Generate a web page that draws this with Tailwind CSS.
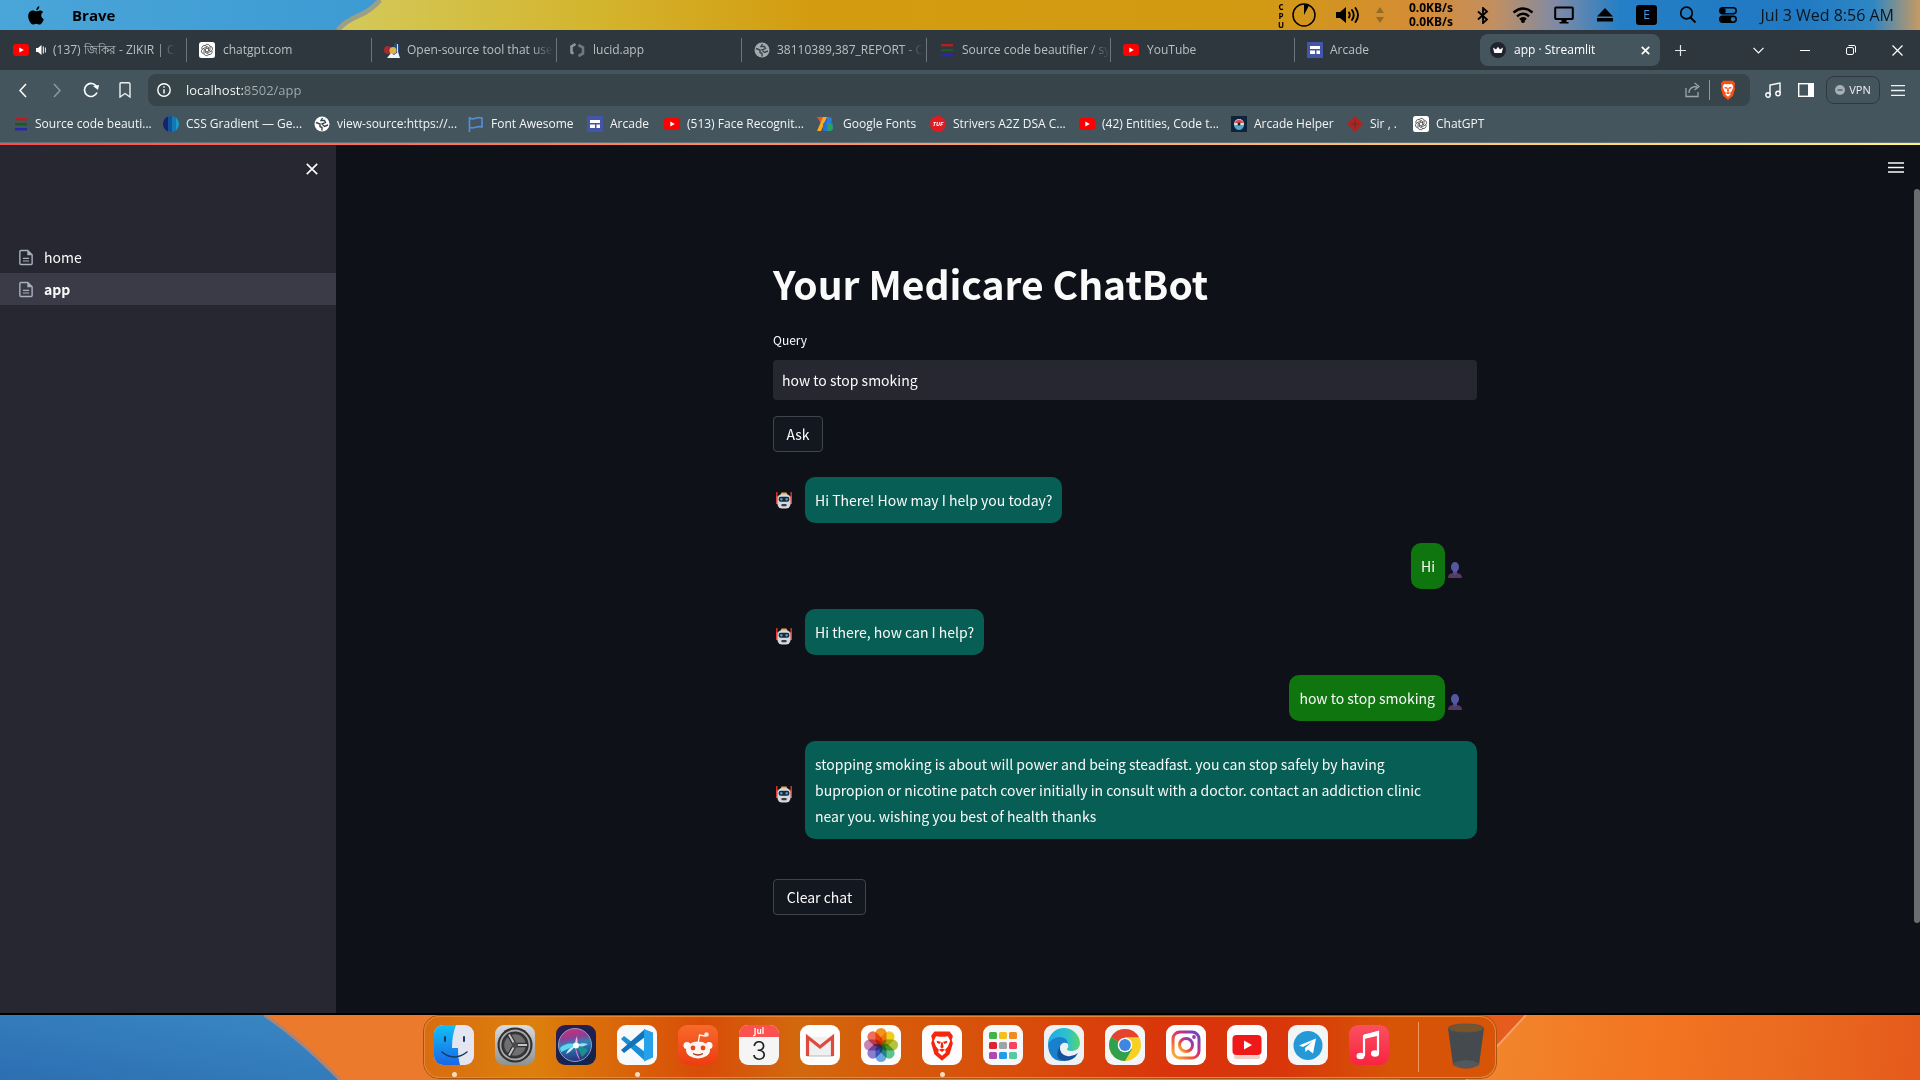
<!DOCTYPE html>
<html lang="en">
<head>
<meta charset="utf-8">
<meta name="viewport" content="width=device-width, initial-scale=1">
<title>app · Streamlit</title>
<script src="https://cdn.jsdelivr.net/npm/@tailwindcss/browser@4"></script>
</head>
<body class="flex h-screen flex-col overflow-hidden bg-[#0e1117] font-['Open_Sans','Noto_Sans',sans-serif] text-[12px] text-[#e8ecee]">

<!-- shared icon symbols -->
<svg class="hidden" aria-hidden="true">
  <symbol id="yt" viewBox="0 0 16 16"><rect y="2" width="16" height="12" rx="3" fill="#f00"/><path d="M6.3 5.4v5.2L10.8 8z" fill="#fff"/></symbol>
  <symbol id="gpt" viewBox="0 0 16 16"><rect width="16" height="16" rx="2.5" fill="#fff"/><g fill="none" stroke="#444" stroke-width=".8"><path id="petal" d="M6.300 3.200a2.700 2.700 0 0 1 4.700 1.300v3.700L8 10"/><use href="#petal" transform="rotate(60 8 8)"/><use href="#petal" transform="rotate(120 8 8)"/><use href="#petal" transform="rotate(180 8 8)"/><use href="#petal" transform="rotate(240 8 8)"/><use href="#petal" transform="rotate(300 8 8)"/></g></symbol>
  <symbol id="bars" viewBox="0 0 16 16"><rect x="2" y="2" width="12" height="2.4" fill="#b3201e"/><rect x="2" y="7" width="12" height="2.4" fill="#155c25"/><rect x="2" y="12" width="12" height="2.4" fill="#2c27a8"/></symbol>
  <symbol id="arcade" viewBox="0 0 16 16"><rect width="16" height="16" fill="#4355a8"/><path d="M3 4h10v3H3zM3 8.5h5V12H3zM9.5 8.5H13V12H9.5z" fill="#fff"/></symbol>
  <symbol id="globe" viewBox="0 0 16 16"><circle cx="8" cy="8" r="7.500" fill="currentColor"/><path d="M2 6.500l4 1.500v2.500l2 1v3M8.500 2L7 4.500h3.500l1 2L8 8l2.500 2.500L14 9" fill="none" stroke="#37444a" stroke-width="1.400"/></symbol>
  <symbol id="doc" viewBox="0 0 16 18"><path d="M1 2.200Q1 1 2.200 1H10l5 5v9.800q0 1.200-1.200 1.200H2.200Q1 17 1 15.800z" fill="none" stroke="#a9b1bd" stroke-width="1.600"/><path d="M9.500 1v5.500H15z" fill="#a9b1bd"/><path d="M4.500 10h7M4.500 13h7" stroke="#a9b1bd" stroke-width="1.300"/></symbol>
  <symbol id="robot" viewBox="0 0 16 17"><path d="M.8 0v8M15.200 0v8" stroke="#e0382c" stroke-width="1.400"/><path d="M0 4h2v8H0zM14 4h2v8h-2z" fill="#d8443a"/><path d="M5.500.5h5l1 2.500h-7z" fill="#f2a93b"/><rect x="1.500" y="2.200" width="13" height="14.300" rx="4.500" fill="#d6d8dc"/><rect x="2.600" y="4.800" width="10.800" height="5" rx="2.200" fill="#20262d"/><circle cx="5.300" cy="7.300" r="1.300" fill="#2aa7e8"/><circle cx="10.700" cy="7.300" r="1.300" fill="#2aa7e8"/><rect x="5.300" y="12" width="5.400" height="2.200" rx="1" fill="#3b3f44"/></symbol>
  <symbol id="user" viewBox="0 0 16 16"><path d="M1 16q0-4.500 5-5h4q5 .5 5 5z" fill="#563862"/><path d="M6 9h4v2.500l-2 1.500-2-1.500z" fill="#4a4d94"/><ellipse cx="8" cy="5" rx="4" ry="5" fill="#5558a0"/></symbol>
  <symbol id="lion" viewBox="0 0 24 28"><path d="M5 1h14l3 4-1 4 1 3-3 10-7 6-7-6-3-10 1-3-1-4z" fill="currentColor"/><path d="M6.500 5.500l3.500.500h4l3.500-.5 2 4-2 5.500-2.500 3 .5 2.500-3.500 3-3.500-3 .5-2.500-2.500-3-2-5.500z" fill="#fff"/><path d="M7 9.500l4 1-1 2-2.500-.8zM17 9.500l-4 1 1 2 2.500-.8zM11.300 11h1.400l.8 4.500-1.500 1-1.500-1zM9 18l3-1.200 3 1.200-3 2z" fill="currentColor"/></symbol>
</svg>

<!-- system menu bar -->
<header class="relative flex h-[30px] shrink-0 items-center overflow-hidden bg-[#d39a10] text-black">
  <svg class="absolute inset-0 size-full" viewBox="0 0 1920 30" preserveAspectRatio="none" aria-hidden="true">
    <defs>
      <linearGradient id="sky"><stop offset="0" stop-color="#4aa5d8"/><stop offset="1" stop-color="#3d9bd3"/></linearGradient>
      <linearGradient id="top" gradientUnits="userSpaceOnUse" x1="340" x2="1920" y1="0" y2="0"><stop offset="0" stop-color="#d3c95a"/><stop offset=".16" stop-color="#d3b52e"/><stop offset=".3" stop-color="#d39c10"/><stop offset=".58" stop-color="#d29a12"/><stop offset=".68" stop-color="#d58c35"/><stop offset=".73" stop-color="#c38f60"/><stop offset=".77" stop-color="#7f8aa5"/><stop offset=".81" stop-color="#247fc6"/><stop offset=".92" stop-color="#2079c2"/><stop offset=".97" stop-color="#2e86c4"/><stop offset="1" stop-color="#c79a62"/></linearGradient>
    </defs>
    <rect width="1920" height="30" fill="url(#top)"/>
    <path d="M0 0h380q-8 10-22 16t-20 14H0z" fill="url(#sky)"/>
    <path d="M380 0q-8 10-22 16t-20 14" fill="none" stroke="#9a9f88" stroke-width="5"/>
  </svg>
  <div class="relative flex w-full items-center pr-[26px] pl-7">
    <svg class="h-[19px] w-4" viewBox="0 0 16 19" role="img" aria-label="Apple"><path d="M11.300 0q.2 3-3 4.500Q8.200 1.200 11.300 0zM8.200 5.300c1.200 0 2-.9 3.700-.9 1.500 0 2.600.7 3.300 1.700-3 1.800-2.400 6 .6 7.100-.8 2.400-2.400 5.300-4.200 5.300-1.300 0-1.700-.8-3.300-.8s-2.100.8-3.300.8C2.700 18.500.2 14 .2 10.300c0-3.700 2.300-5.800 4.600-5.800 1.500 0 2.400.8 3.400.8z"/></svg>
    <button class="ml-7 text-[15px] leading-5 font-bold">Brave</button>
    <div class="ml-auto flex items-center">
      <span class="flex w-2 flex-col items-center text-[8px] leading-[9px] font-bold"><span>C</span><span>P</span><span>U</span></span>
      <svg class="ml-[7px] size-6" viewBox="0 0 24 24"><circle cx="12" cy="12" r="11" fill="none" stroke="#000" stroke-width="1.500"/><path d="M12 12V1q3 0 5 1.500z"/></svg>
      <svg class="ml-5 h-[18px] w-6" viewBox="0 0 24 18"><path d="M0 6h4l6-5v16l-6-5H0z"/><path d="M13 6.500q1.500 2.500 0 5M16 4q3.500 5 0 10M19.500 2q5 7 0 14" fill="none" stroke="#000" stroke-width="1.900" stroke-linecap="round"/></svg>
      <svg class="ml-4 h-4 w-2" viewBox="0 0 8 16" fill="#8f6b2c"><path d="M4 0l4 6H0zM4 16l4-6H0z"/></svg>
      <span class="ml-[23px] w-12 text-center text-[12px] leading-[14px] font-bold whitespace-nowrap"><span class="block">0.0KB/s</span><span class="block">0.0KB/s</span></span>
      <svg class="ml-[22px] h-[17px] w-3" viewBox="0 0 12 17"><path d="M1 4.500l9 8L6 16V1l4 3.500-9 8" fill="none" stroke="#000" stroke-width="1.800"/></svg>
      <svg class="ml-[23px] h-4 w-[22px]" viewBox="0 0 22 16"><path d="M1.500 5.500q9.500-8 19 0M5 9.300q6-5 12 0M8 12.500q3-2.500 6 0" fill="none" stroke="#000" stroke-width="2.400"/><circle cx="11" cy="14" r="2"/></svg>
      <svg class="ml-5 h-[18px] w-5" viewBox="0 0 20 18"><path d="M2 1.500h16q.8 0 .8.800v10q0 .8-.8.800H2q-.8 0-.8-.8v-10q0-.8.800-.8z" fill="none" stroke="#000" stroke-width="2"/><path d="M7.500 13h5v3h2v1.500h-9V16h2z"/></svg>
      <svg class="ml-[23px] h-[14px] w-4" viewBox="0 0 16 14"><path d="M8 0l8 8.500H0zM0 10h16v3.600H0z"/></svg>
      <span class="ml-[23px] flex h-5 w-[21px] items-center justify-center rounded-[3px] bg-black text-[12px] text-[#4a9be0]">E</span>
      <svg class="ml-[22px] size-[18px]" viewBox="0 0 18 18"><circle cx="7.500" cy="7" r="5.800" fill="none" stroke="#000" stroke-width="1.700"/><path d="M11.500 11.500l5 5" stroke="#000" stroke-width="2"/></svg>
      <svg class="ml-[22px] h-4 w-[18px]" viewBox="0 0 18 16"><rect x=".8" y=".8" width="16.400" height="6" rx="3" fill="none" stroke="#000" stroke-width="1.500"/><circle cx="4" cy="3.800" r="2.800"/><rect y="8.500" width="18" height="7.500" rx="3.700"/><circle cx="14" cy="12.200" r="2.200" fill="#2079c2"/></svg>
      <time class="ml-[23px] w-[134px] text-right text-[16px] leading-5 whitespace-nowrap text-[#0a1622]">Jul 3 Wed 8:56 AM</time>
    </div>
  </div>
</header>

<!-- tab strip -->
<nav class="flex h-10 shrink-0 items-center bg-[#2d373d] pl-px text-[#b9c0c4]" aria-label="Tabs">
  <button class="flex h-6 w-[186px] items-center border-r border-[#6b757b] pl-3 whitespace-nowrap"><svg class="size-4 shrink-0"><use href="#yt"/></svg><svg class="mx-[7px] h-[10px] w-[10px] shrink-0" viewBox="0 0 10 10" fill="#fff"><path d="M0 3h2l3.500-3v10L2 7H0zM6.800 1.500h1v7h-1zM8.900 2.500h.9v5h-.9z"/></svg><span class="mask-r-from-85% text-left">(137) জিকির - ZIKIR | C</span></button>
  <button class="flex h-6 w-[185px] items-center gap-2 border-r border-[#6b757b] pl-3 whitespace-nowrap"><svg class="size-4 shrink-0"><use href="#gpt"/></svg>chatgpt.com</button>
  <button class="flex h-6 w-[185px] items-center gap-[7px] border-r border-[#6b757b] pl-3 whitespace-nowrap"><svg class="size-4 shrink-0" viewBox="0 0 16 16"><path d="M11 0l4 4v9H9z" fill="#2c4f88"/><circle cx="4" cy="8" r="4" fill="#a62a35"/><circle cx="9" cy="8.500" r="3.500" fill="#e0b04a"/><path d="M3 16l4-5 3 2 4-3 2 6z" fill="#f3f3f3"/><path d="M13.500 2v9" stroke="#d9dde3"/></svg><span class="mask-r-from-85% text-left">Open-source tool that use</span></button>
  <button class="flex h-6 w-[185px] items-center gap-2 border-r border-[#6b757b] pl-3 whitespace-nowrap"><svg class="size-4 shrink-0" viewBox="0 0 16 16" fill="none" stroke-width="2.600"><path d="M6.500 2L2.500 4.500v6l2 1.200" stroke="#8d969b"/><path d="M9.500 14l4.500-2.500V5.500L9.500 3" stroke="#71797e"/></svg>lucid.app</button>
  <button class="flex h-6 w-[185px] items-center gap-[7px] border-r border-[#6b757b] pl-3 whitespace-nowrap"><svg class="size-4 shrink-0 text-[#a4abb0]"><use href="#globe"/></svg><span class="mask-r-from-85% text-left">38110389,387_REPORT - C</span></button>
  <button class="flex h-6 w-[184px] items-center gap-[7px] border-r border-[#6b757b] pl-3 whitespace-nowrap"><svg class="size-4 shrink-0"><use href="#bars"/></svg><span class="mask-r-from-85% text-left">Source code beautifier / sy</span></button>
  <button class="flex h-6 w-[184px] items-center gap-2 border-r border-[#6b757b] pl-3 whitespace-nowrap"><svg class="size-4 shrink-0"><use href="#yt"/></svg>YouTube</button>
  <button class="flex h-6 w-[185px] items-center gap-[7px] pl-3 whitespace-nowrap"><svg class="size-4 shrink-0"><use href="#arcade"/></svg>Arcade</button>
  <div class="flex h-8 w-[180px] items-center gap-2 rounded-lg bg-[#44555d] px-[10px] whitespace-nowrap text-white"><svg class="size-4 shrink-0" viewBox="0 0 16 16"><circle cx="8" cy="8" r="8" fill="#20242e"/><path d="M3 5.500l3 2 2-2.700 2 2.700 3-2-1.300 5.500H4.300z" fill="#fff"/></svg>app · Streamlit<button class="ml-auto" aria-label="Close tab"><svg class="size-[9px]" viewBox="0 0 9 9" stroke="#fff" stroke-width="1.700"><path d="M.8.8l7.400 7.400M8.200.8L.8 8.200"/></svg></button></div>
  <button class="ml-[15px]" aria-label="New tab"><svg class="size-[11px]" viewBox="0 0 11 11" stroke="#e3e6e8" stroke-width="1.200"><path d="M5.500 0v11M0 5.500h11"/></svg></button>
  <div class="mr-[17px] ml-auto flex items-center gap-9">
    <button aria-label="Search tabs"><svg class="h-[7px] w-[11px]" viewBox="0 0 11 7" fill="none" stroke="#fff" stroke-width="1.200"><path d="M.5.8l5 5.200 5-5.200"/></svg></button>
    <button aria-label="Minimise"><svg class="h-[11px] w-[10px]" viewBox="0 0 10 11" stroke="#fff"><path d="M0 5.500h10"/></svg></button>
    <button aria-label="Restore"><svg class="size-[10px]" viewBox="0 0 10 10" fill="none" stroke="#fff"><rect x=".5" y="2.500" width="7" height="7" rx="1.500"/><path d="M2.500.5H8q1.500 0 1.500 1.500v5.500"/></svg></button>
    <button aria-label="Close window"><svg class="size-[11px]" viewBox="0 0 11 11" stroke="#fff" stroke-width="1.200"><path d="M.5.5l10 10M10.500.5l-10 10"/></svg></button>
  </div>
</nav>

<!-- address bar -->
<div class="flex h-9 shrink-0 items-center bg-[#44555d] pt-1 pr-[15px] pl-[19px]">
  <button aria-label="Back"><svg class="h-[15px] w-2" viewBox="0 0 8 15" fill="none" stroke="#fff" stroke-width="1.500"><path d="M7 1L1 7.500 7 14"/></svg></button>
  <button class="ml-[26px]" aria-label="Forward"><svg class="h-[15px] w-2" viewBox="0 0 8 15" fill="none" stroke="#8d999f" stroke-width="1.500"><path d="M1 1l6 6.500L1 14"/></svg></button>
  <button class="ml-[22px]" aria-label="Reload"><svg class="size-4" viewBox="0 0 16 16" fill="none" stroke="#fff" stroke-width="1.700"><path d="M13.500 4.500A6.500 6.500 0 1 0 14 10.500"/><path d="M10 4l6-1-1 5z" fill="#fff" stroke="none"/></svg></button>
  <button class="ml-5" aria-label="Bookmark"><svg class="h-4 w-3" viewBox="0 0 12 16" fill="none" stroke="#eef1f2" stroke-width="1.400"><path d="M1 2q0-1.200 1.200-1.200h7.600Q11 .8 11 2v13l-5-3.500L1 15z"/></svg></button>
  <form class="ml-[17px] flex h-8 min-w-0 flex-1 items-center rounded-lg bg-[#37444a] pr-3 pl-[9px]">
    <svg class="size-[14px]" viewBox="0 0 14 14" fill="none" stroke="#fff" stroke-width="1.400"><circle cx="7" cy="7" r="6.200"/><path d="M7 6.200v4.300M7 3.300v1.500"/></svg>
    <input class="ml-[15px] flex-1 bg-linear-to-r from-white from-[57px] to-[#a3adb2] to-[57px] bg-clip-text text-[13px] leading-5 text-transparent outline-none" value="localhost:8502/app" aria-label="Address">
    <svg class="size-4" viewBox="0 0 16 16" fill="none" stroke="#9ba6ac" stroke-width="1.300"><path d="M1 6v8.500h12V10M4 11q0-6.500 8-6.500M9.500 1l4.500 3.500L9.500 8"/></svg>
    <span class="mx-2 h-5 w-px bg-[#8d999f]"></span>
    <svg class="mr-px ml-px h-5 w-[18px] text-[#fb4f14]"><use href="#lion"/></svg>
  </form>
  <button class="ml-[15px]" aria-label="Media"><svg class="size-4" viewBox="0 0 16 16" fill="none" stroke="#fff" stroke-width="1.400"><path d="M5 13V3l10-2v10"/><circle cx="3" cy="13" r="2.200"/><circle cx="13" cy="11.500" r="2.200"/></svg></button>
  <button class="ml-[17px]" aria-label="Side panel"><svg class="h-[14px] w-4" viewBox="0 0 16 14"><rect x=".7" y=".7" width="14.600" height="12.600" fill="none" stroke="#fff" stroke-width="1.400"/><path d="M10 0h6v14h-6z" fill="#fff"/></svg></button>
  <button class="ml-3 flex h-7 w-[54px] items-center justify-center gap-1 rounded-lg border border-[#2d393f] text-[11px] text-[#f0f2f3]"><svg class="size-[10px]" viewBox="0 0 10 10"><circle cx="5" cy="5" r="5" fill="#a7b0b5"/><path d="M2.500 5h5" stroke="#44555d" stroke-width="1.300"/></svg>VPN</button>
  <button class="ml-[11px]" aria-label="Menu"><svg class="h-[11px] w-[14px]" viewBox="0 0 14 11" stroke="#f0f2f3" stroke-width="1.300"><path d="M0 .7h14M0 5.500h14M0 10.300h14"/></svg></button>
</div>

<!-- bookmarks -->
<nav class="flex h-9 shrink-0 items-center bg-[#44555d] pl-[13px] whitespace-nowrap text-[#f3f5f6]" aria-label="Bookmarks">
  <a href="#" class="flex w-[150px] items-center gap-[6px]"><svg class="size-4"><use href="#bars"/></svg>Source code beauti...</a>
  <a href="#" class="flex w-[151px] items-center gap-[7px]"><svg class="size-4" viewBox="0 0 16 16"><clipPath id="cc"><circle cx="8" cy="8" r="8"/></clipPath><g clip-path="url(#cc)"><path d="M0 0h5v16H0z" fill="#14246a"/><path d="M5 0h4v16H5z" fill="#12539c"/><path d="M9 0h4v16H9z" fill="#1478b5"/><path d="M13 0h3v16h-3z" fill="#1a99cc"/></g></svg>CSS Gradient — Ge...</a>
  <a href="#" class="flex w-[154px] items-center gap-[7px]"><svg class="size-4 text-white"><use href="#globe"/></svg>view-source:https://...</a>
  <a href="#" class="flex w-[119px] items-center gap-[7px]"><svg class="size-4" viewBox="0 0 16 16" fill="none" stroke="#538dd7" stroke-width="1.700"><path d="M1.500 1v15M1.500 2q3 1.500 6 .3t6.500-.3v9q-3-1-6.500.2t-6 0"/></svg>Font Awesome</a>
  <a href="#" class="flex w-[77px] items-center gap-[7px]"><svg class="size-4"><use href="#arcade"/></svg>Arcade</a>
  <a href="#" class="flex w-[153px] items-center gap-[7px]"><svg class="size-4"><use href="#yt"/></svg>(513) Face Recognit...</a>
  <a href="#" class="flex w-[113px] items-center gap-[10px]"><svg class="size-4" viewBox="0 0 16 16"><path d="M0 1h7L3.500 7z" fill="#e8503a"/><path d="M6 1h4L4 15H0z" fill="#f5ae19"/><path d="M10 3v12H6V8z" fill="#2670d9"/><path d="M10 1h2q3 0 3 3 0 1.500-1 2 2 1 2 4 0 5-4 5h-2z" fill="#2b7de0"/><path d="M11 7q5 1 5 5 0 3-4 3h-1z" fill="#27a35c"/></svg>Google Fonts</a>
  <a href="#" class="flex w-[149px] items-center gap-[7px]"><svg class="size-4" viewBox="0 0 16 16"><circle cx="8" cy="8" r="8" fill="#e11b22"/><text x="8" y="10.200" text-anchor="middle" font-size="6" font-weight="700" font-style="italic" fill="#fff">TUF</text></svg>Strivers A2Z DSA C...</a>
  <a href="#" class="flex w-[152px] items-center gap-[7px]"><svg class="size-4"><use href="#yt"/></svg>(42) Entities, Code t...</a>
  <a href="#" class="flex w-[116px] items-center gap-[7px]"><svg class="size-4" viewBox="0 0 16 16"><rect width="16" height="16" fill="#10233c"/><circle cx="8" cy="8" r="5" fill="#d6e6ee"/><path d="M3 7q5-7 10 0z" fill="#d94a4a"/><path d="M3 9h10q-1 5-5 5t-5-5z" fill="#51a8c9"/><circle cx="8" cy="8" r="1.500" fill="#10233c"/></svg>Arcade Helper</a>
  <a href="#" class="flex w-[66px] items-center gap-[7px]"><svg class="size-4" viewBox="0 0 16 16"><path d="M8 0l8 8-8 8-8-8z" fill="#b3221f"/><path d="M8 4.500v7M4.500 8h7" stroke="#6b3034" stroke-width="1.500"/></svg>Sir , .</a>
  <a href="#" class="flex items-center gap-[7px]"><svg class="size-4"><use href="#gpt"/></svg>ChatGPT</a>
</nav>
<div class="h-[3px] shrink-0 border-t border-[#5f7179] bg-linear-to-r from-[#ff4b4b] via-[#ff9b63] via-50% to-[#fff27a]"></div>

<!-- page -->
<div class="flex min-h-0 flex-1 font-['Noto_Sans_CJK_SC',sans-serif] text-[14px] text-[#fafafa]">
  <aside class="w-[336px] shrink-0 bg-[#262730]">
    <div class="flex h-24 items-start justify-end pt-[18px] pr-[18px]"><button aria-label="Close sidebar"><svg class="size-3" viewBox="0 0 12 12" stroke="#fafafa" stroke-width="1.700"><path d="M.8.8l10.400 10.400M11.200.8L.8 11.200"/></svg></button></div>
    <ul>
      <li><a href="#" class="flex h-8 items-center gap-[11px] pl-[19px]"><svg class="h-[17px] w-[14px]"><use href="#doc"/></svg>home</a></li>
      <li><a href="#" class="flex h-8 items-center gap-[11px] bg-[#3a3b46] pl-[19px] font-bold"><svg class="h-[17px] w-[14px]"><use href="#doc"/></svg>app</a></li>
    </ul>
  </aside>

  <div class="flex min-w-0 flex-1 flex-col">
    <div class="flex h-11 shrink-0 items-start justify-end pt-[17px] pr-4"><button aria-label="Main menu"><svg class="h-[11px] w-4" viewBox="0 0 16 11" stroke="#fafafa" stroke-width="1.700"><path d="M0 1h16M0 5.500h16M0 10h16"/></svg></button></div>
    <div class="flex min-h-0 flex-1">
      <main class="flex min-w-0 flex-1 flex-col items-center">
        <div class="flex w-full max-w-[704px] flex-col pt-[66px]">
          <h1 class="text-[39px] leading-[56px] font-bold">Your Medicare ChatBot</h1>
          <label for="query" class="mt-[17px] text-[12px] leading-6">Query</label>
          <input id="query" value="how to stop smoking" class="mt-2 h-10 rounded bg-[#262730] px-[9px] outline-none">
          <button class="mt-4 h-9 w-[50px] rounded border border-[#41444c] bg-[#131720]">Ask</button>
          <div class="mt-[25px] flex flex-col gap-5 leading-[26px]">
            <div class="flex items-center gap-[13px] pl-[3px]"><svg class="h-[17px] w-4 shrink-0"><use href="#robot"/></svg><p class="rounded-[10px] bg-[#075e54] p-[10px]">Hi There! How may I help you today?</p></div>
            <div class="flex items-center justify-end gap-[2px] pr-[14px]"><p class="rounded-[10px] bg-[#0f750f] p-[10px]">Hi</p><svg class="mt-2 size-4"><use href="#user"/></svg></div>
            <div class="flex items-center gap-[13px] pl-[3px]"><svg class="mt-2 h-[17px] w-4 shrink-0"><use href="#robot"/></svg><p class="rounded-[10px] bg-[#075e54] p-[10px]">Hi there, how can I help?</p></div>
            <div class="flex items-center justify-end gap-[2px] pr-[14px]"><p class="rounded-[10px] bg-[#0f750f] p-[10px]">how to stop smoking</p><svg class="mt-2 size-4"><use href="#user"/></svg></div>
            <div class="flex items-center gap-[13px] pl-[3px]"><svg class="mt-2 h-[17px] w-4 shrink-0"><use href="#robot"/></svg><p class="flex-1 rounded-[10px] bg-[#075e54] p-[10px]">stopping smoking is about will power and being steadfast. you can stop safely by having<br>bupropion or nicotine patch cover initially in consult with a doctor. contact an addiction clinic<br>near you. wishing you best of health thanks</p></div>
          </div>
          <button class="mt-10 h-9 w-[93px] rounded border border-[#41444c] bg-[#131720]">Clear chat</button>
        </div>
      </main>
      <div class="w-[6px] shrink-0"><div class="h-[734px] rounded-full bg-[#6b6c70]"></div></div>
    </div>
  </div>
</div>

<!-- dock -->
<footer class="relative flex h-[67px] shrink-0 justify-center overflow-hidden border-t-2 border-black bg-[#ec7a2c]">
  <svg class="absolute inset-0 size-full" viewBox="0 0 1920 65" preserveAspectRatio="none" aria-hidden="true">
    <defs>
      <linearGradient id="sea" x1="0" y1="1" x2="1" y2="0"><stop offset="0" stop-color="#2c6fb2"/><stop offset="1" stop-color="#3a88c4"/></linearGradient>
      <linearGradient id="sun" gradientUnits="userSpaceOnUse" x1="1490" x2="1920" y1="0" y2="60"><stop offset="0" stop-color="#f1862d"/><stop offset=".4" stop-color="#f37420"/><stop offset=".7" stop-color="#ea6a20"/><stop offset="1" stop-color="#e55a1b"/></linearGradient>
    </defs>
    <path d="M0 0h264q36 24 76 65H0z" fill="url(#sea)"/>
    <path d="M264 0q36 24 76 65" fill="none" stroke="#a98478" stroke-width="3"/>
    <path d="M1400 0h126l-60 65h-66z" fill="#e55c1c"/>
    <path d="M1526 0h394v65h-454z" fill="url(#sun)"/>
    <path d="M1526 0l-60 65" stroke="#f5a06a" stroke-width="2"/>
  </svg>
  <div class="relative flex h-16 items-start gap-[21px] rounded-2xl border border-[#a8560f] pt-[9px] pr-3 pl-[10px]">
    <div class="absolute inset-0 rounded-2xl bg-[linear-gradient(90deg,#d96c10_0%,#dc800c_10%,#da6a0a_17%,#d84c08_26%,#d2690e_35%,#d65c0a_42%,#d84c0a_56%,#d9340b_70%,#d9360b_80%,#d75306_90%,#d75408_100%)] shadow-[inset_0_0_0_1px_#e2873b]"></div>

    <button class="relative size-10" aria-label="Finder"><svg class="size-10" viewBox="0 0 40 40"><defs><clipPath id="rr"><rect width="40" height="40" rx="9"/></clipPath><linearGradient id="fb" x2="0" y2="1"><stop stop-color="#12c0f5"/><stop offset="1" stop-color="#1a66e6"/></linearGradient></defs><g clip-path="url(#rr)"><path d="M0 0h40v40H0z" fill="#e3e6f0"/><path d="M0 0h22q-4 10-4 23h6q0 10 2 17H0z" fill="url(#fb)"/></g><path d="M11 12v4M30 12v4" stroke="#153a60" stroke-width="2" stroke-linecap="round"/><path d="M8 27q12 10 25 0" fill="none" stroke="#153a60" stroke-width="1.500" stroke-linecap="round"/></svg><span class="absolute top-[47px] left-[18px] size-[5px] rounded-full bg-[#f8dcc0]"></span></button>
    <button class="relative size-10" aria-label="Settings"><svg class="size-10" viewBox="0 0 40 40"><defs><linearGradient id="st" x2="0" y2="1"><stop stop-color="#d8dbe0"/><stop offset="1" stop-color="#8f9292"/></linearGradient></defs><rect width="40" height="40" rx="9" fill="url(#st)"/><circle cx="20" cy="20" r="17.500" fill="#2f2f31"/><circle cx="20" cy="20" r="14.500" fill="none" stroke="#a6a6a8" stroke-width="1.800"/><circle cx="20" cy="20" r="11.500" fill="#6f6f72" stroke="#38383a" stroke-width="1.500"/><path d="M20 20l-6-10.500M20 20h12M20 20l-6 10.500" stroke="#303032" stroke-width="4.500"/><path d="M20 20l-6-10.500M20 20h12M20 20l-6 10.500" stroke="#c4c4c6" stroke-width="2"/><circle cx="20" cy="20" r="3" fill="#4a4a4c"/></svg></button>
    <button class="relative size-10" aria-label="Siri"><svg class="size-10" viewBox="0 0 40 40"><defs><linearGradient id="si" x1="0" y1="0" x2=".5" y2="1"><stop stop-color="#2c1c58"/><stop offset="1" stop-color="#13244b"/></linearGradient><linearGradient id="so" x2=".2" y2="1"><stop stop-color="#e02a6c"/><stop offset=".35" stop-color="#8c3f96"/><stop offset=".55" stop-color="#2a86b8"/><stop offset="1" stop-color="#263a86"/></linearGradient></defs><rect width="40" height="40" rx="9" fill="url(#si)"/><circle cx="19" cy="20" r="16.500" fill="url(#so)" stroke="#9aa6c4" stroke-width=".9"/><path d="M4 23q6-6 15-4l-2 3q-6 2-12 5z" fill="#5fd8ef"/><path d="M20 20q6-3 12-1-4 3-11 3z" fill="#9fe0f5"/><path d="M19 20q0-5 2-9 1 5 0 9z" fill="#f6c4e0"/><path d="M20 21q7 0 12 4-3 5-6 7-2-6-6-11z" fill="#1c8f8a"/><path d="M19 21l5 14q-4-4-5-14z" fill="#f47cc4"/><path d="M19 21q-4 6-9 8 2-6 9-8z" fill="#cdefff"/><circle cx="20" cy="20.500" r="3" fill="#fff"/></svg></button>
    <button class="relative size-10" aria-label="Visual Studio Code"><svg class="size-10" viewBox="0 0 40 40"><rect width="40" height="40" rx="9" fill="#f7f9fb"/><path d="M4 14l3-3 21 16v9z" fill="#1a8fd6"/><path d="M4 25l3 3 21-16V4z" fill="#1274b8"/><path d="M27 4l9 3.500v25L27 36.500z" fill="#26a1ea"/></svg><span class="absolute top-[47px] left-[18px] size-[5px] rounded-full bg-[#f8dcc0]"></span></button>
    <button class="relative size-10" aria-label="Reddit"><svg class="size-10" viewBox="0 0 40 40"><defs><linearGradient id="rd" x2="0" y2="1"><stop stop-color="#f9692b"/><stop offset="1" stop-color="#ec3d10"/></linearGradient></defs><rect width="40" height="40" rx="9" fill="url(#rd)"/><path d="M20 19l1.500-9 6 1" fill="none" stroke="#fff" stroke-width="1.300"/><circle cx="28.500" cy="9.500" r="2.200" fill="#f5e9e3"/><circle cx="9" cy="20.500" r="3.500" fill="#fff"/><circle cx="31" cy="20.500" r="3.500" fill="#fff"/><ellipse cx="20" cy="25" rx="12" ry="8.500" fill="#fbf4f0"/><circle cx="15" cy="23" r="2.400" fill="#e8491c"/><circle cx="25" cy="23" r="2.400" fill="#e8491c"/><path d="M15 28.500q5 3 10 0" fill="none" stroke="#9d3818" stroke-width="1.300"/></svg></button>
    <button class="relative flex size-10 flex-col overflow-hidden rounded-[9px] bg-[#f5f5f6] text-center" aria-label="Calendar"><span class="h-3 w-full bg-[#fb5150] text-[8px] leading-3 font-bold text-white">Jul</span><span class="w-full font-['Inter',sans-serif] text-[25px] leading-7 font-light text-[#222]">3</span></button>
    <button class="relative size-10" aria-label="Gmail"><svg class="size-10" viewBox="0 0 40 40"><rect width="40" height="40" rx="9" fill="#fdfdfd"/><path d="M7 12h26v19H7z" fill="#f0f0f1"/><path d="M7 31h26" stroke="#b9b9bb"/><path d="M7.500 31V12L20 22l12.500-10v19" fill="none" stroke="#e04a3c" stroke-width="3.200"/></svg></button>
    <button class="relative size-10" aria-label="Photos"><svg class="size-10" viewBox="0 0 40 40"><rect width="40" height="40" rx="9" fill="#fdfdfd"/><g class="mix-blend-multiply *:mix-blend-multiply"><rect x="14.500" y="3" width="11" height="17" rx="5.500" fill="#f7941e"/><rect x="14.500" y="3" width="11" height="17" rx="5.500" fill="#f1cf1f" transform="rotate(45 20 20)"/><rect x="14.500" y="3" width="11" height="17" rx="5.500" fill="#b6c43c" transform="rotate(90 20 20)"/><rect x="14.500" y="3" width="11" height="17" rx="5.500" fill="#5cc793" transform="rotate(135 20 20)"/><rect x="14.500" y="3" width="11" height="17" rx="5.500" fill="#6aa8e6" transform="rotate(180 20 20)"/><rect x="14.500" y="3" width="11" height="17" rx="5.500" fill="#8d7fd0" transform="rotate(225 20 20)"/><rect x="14.500" y="3" width="11" height="17" rx="5.500" fill="#c984b8" transform="rotate(270 20 20)"/><rect x="14.500" y="3" width="11" height="17" rx="5.500" fill="#f0705c" transform="rotate(315 20 20)"/></g></svg></button>
    <button class="relative size-10" aria-label="Brave"><svg class="size-10" viewBox="0 0 40 40"><rect width="40" height="40" rx="9" fill="#fdfdfd"/><svg x="7" y="5" width="26" height="31" class="text-[#f5260b]"><use href="#lion"/></svg></svg><span class="absolute top-[47px] left-[18px] size-[5px] rounded-full bg-[#f8dcc0]"></span></button>
    <button class="relative size-10" aria-label="Launchpad"><svg class="size-10" viewBox="0 0 40 40"><rect width="40" height="40" rx="9" fill="#f6f7f8"/><rect x="6" y="7" width="8" height="7" rx="1.500" fill="#3fb549"/><rect x="16" y="7" width="8" height="7" rx="1.500" fill="#f6bf1b"/><rect x="26" y="7" width="8" height="7" rx="1.500" fill="#f28b1e"/><rect x="6" y="17" width="8" height="7" rx="1.500" fill="#df2330"/><rect x="16" y="17" width="8" height="7" rx="1.500" fill="#9da3a8"/><rect x="26" y="17" width="8" height="7" rx="1.500" fill="#f94060"/><rect x="6" y="27" width="8" height="7" rx="1.500" fill="#ad48b5"/><rect x="16" y="27" width="8" height="7" rx="1.500" fill="#1f9cf0"/><rect x="26" y="27" width="8" height="7" rx="1.500" fill="#55caa0"/></svg></button>
    <button class="relative size-10" aria-label="Edge"><svg class="size-10" viewBox="0 0 40 40"><defs><linearGradient id="eg"><stop stop-color="#1fa9e6"/><stop offset=".6" stop-color="#2cc1cf"/><stop offset="1" stop-color="#5ad46a"/></linearGradient></defs><rect width="40" height="40" rx="9" fill="#eef1f4"/><path d="M4 20a16 16 0 0 1 32-2q0 7-8 8-5 0-5-2 2-2 1-5-3-5-10-4-7 1-10 5z" fill="url(#eg)"/><path d="M4 20q3-7 11-8 8 0 9 7-2-2-5-1-4 2-3 7 2 7 9 8-4 3-8 3Q5 35 4 20z" fill="#1b80cc"/><path d="M16 21q-1 8 7 10 6 1 11-3-4 8-14 8-11-2-4-15z" fill="#12519c"/></svg></button>
    <button class="relative size-10" aria-label="Chrome"><svg class="size-10" viewBox="0 0 40 40"><rect width="40" height="40" rx="9" fill="#f3f6f9"/><circle cx="20" cy="20" r="16" fill="#f7d022"/><path d="M20 20L6 12.300A16 16 0 0 1 34 12.300H20z" fill="#e5432f"/><path d="M6 12.300A16 16 0 0 0 20 36l7-12-7-4z" fill="#30a04e"/><circle cx="20" cy="20" r="7.300" fill="#fff"/><circle cx="20" cy="20" r="5.900" fill="#3e86e0"/></svg></button>
    <button class="relative size-10" aria-label="Instagram"><svg class="size-10" viewBox="0 0 40 40"><defs><linearGradient id="ig" x1="0" y1="1" x2="1" y2="0"><stop stop-color="#f9c23c"/><stop offset=".35" stop-color="#ef5a35"/><stop offset=".6" stop-color="#d02e7c"/><stop offset="1" stop-color="#5b49cf"/></linearGradient></defs><rect width="40" height="40" rx="9" fill="#fdfdfd"/><g fill="none" stroke="url(#ig)" stroke-width="3"><rect x="7" y="7" width="26" height="26" rx="7"/><circle cx="20" cy="20" r="6.500"/></g><circle cx="28" cy="12" r="1.900" fill="#a637a5"/></svg></button>
    <button class="relative size-10" aria-label="YouTube"><svg class="size-10" viewBox="0 0 40 40"><rect width="40" height="40" rx="9" fill="#fdfdfd"/><rect x="7" y="29" width="26" height="5" rx="2" fill="#f3cdc8"/><rect x="5.500" y="10" width="29" height="20" rx="4" fill="#f0191a"/><path d="M17 15.500v9l8-4.500z" fill="#fff"/></svg></button>
    <button class="relative size-10" aria-label="Telegram"><svg class="size-10" viewBox="0 0 40 40"><rect width="40" height="40" rx="9" fill="#f4f5f6"/><circle cx="20" cy="20.500" r="14.500" fill="#2599d8"/><path d="M11 20.500L28 13.500l-3 15-5-4-2.500 2.500-.5-4 7-6-9 5z" fill="#fff"/></svg></button>
    <button class="relative size-10" aria-label="Music"><svg class="size-10" viewBox="0 0 40 40"><defs><linearGradient id="mu" x2="0" y2="1"><stop stop-color="#fb5061"/><stop offset="1" stop-color="#f82440"/></linearGradient></defs><rect width="40" height="40" rx="9" fill="url(#mu)"/><path d="M15 31V11l14-4v21" fill="none" stroke="#fff" stroke-width="2.200"/><path d="M15 9.500L30 6v4.500l-15 3.500z" fill="#fff"/><ellipse cx="11.500" cy="31" rx="4" ry="3.200" fill="#fff"/><ellipse cx="26" cy="28.500" rx="4" ry="3.200" fill="#fff"/></svg></button>
    <span class="relative -mt-[3px] mr-2 ml-2 h-[50px] w-px bg-[#ee9560]"></span>
    <button class="relative -mt-[2px]" aria-label="Trash"><svg class="h-[46px] w-9" viewBox="0 0 36 46"><path d="M0 5l5 37q13 7 26 0l5-37z" fill="#454a4e"/><path d="M5 40q13-6 26 0l-.5 3q-12 5-25 0z" fill="#60666a" opacity=".5"/><ellipse cx="18" cy="5" rx="17.500" ry="4" fill="#7a5326" stroke="#54585b"/></svg></button>
  </div>
</footer>
</body>
</html>
